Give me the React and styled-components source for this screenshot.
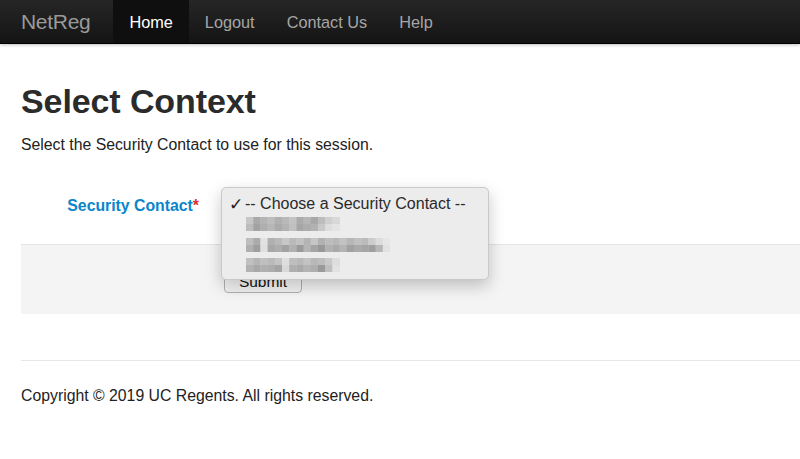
import React from "react";
import styled, { createGlobalStyle } from "styled-components";

const GlobalStyle = createGlobalStyle`
  html, body { margin: 0; padding: 0; background: #fff; }
  body {
    font-family: "Liberation Sans", Arial, Helvetica, sans-serif;
    color: #333;
    overflow: hidden;
  }
  * { box-sizing: border-box; }
`;

const Navbar = styled.nav`
  height: 44px;
  display: flex;
  align-items: stretch;
  background: linear-gradient(to bottom, #262626, #141414);
  border-bottom: 1px solid #000;
  box-shadow: 0 1px 3px rgba(0, 0, 0, 0.25);
`;

const Brand = styled.a`
  display: flex;
  align-items: center;
  padding: 0 23px 0 21px;
  font-size: 21px;
  font-weight: 300;
  color: #9a9a9a;
  letter-spacing: -0.3px;
  text-decoration: none;
`;

const NavItem = styled.a`
  display: flex;
  align-items: center;
  padding: 1px 16px 0;
  font-size: 16.3px;
  color: ${(p) => (p.$active ? "#fff" : "#a6a6a6")};
  background: ${(p) => (p.$active ? "#0f0f0f" : "transparent")};
  text-decoration: none;
`;

const Main = styled.main`
  padding-left: 21px;
`;

const Title = styled.h1`
  margin: 37px 0 0;
  font-size: 34px;
  line-height: 40px;
  font-weight: bold;
  color: #2b2b2b;
  letter-spacing: -0.1px;
`;

const Lead = styled.p`
  margin: 14px 0 0;
  font-size: 15.8px;
  line-height: 20px;
  color: #222;
`;

const Form = styled.form`
  margin-top: 30px;
`;

const ControlGroup = styled.div`
  display: flex;
  align-items: flex-start;
  height: 59px;
`;

const Label = styled.label`
  width: 178px;
  text-align: right;
  font-size: 15.8px;
  font-weight: bold;
  color: #0a85cc;
  line-height: 20px;
  padding-top: 11px;
`;

const Req = styled.span`
  color: #d9302c;
`;

const Controls = styled.div`
  position: relative;
  margin-left: 25px;
`;

const Popup = styled.div`
  position: absolute;
  left: -3px;
  top: 2px;
  z-index: 5;
  width: 268px;
  height: 93px;
  padding-top: 5px;
  background: #ececec;
  border: 1px solid #c9c9c9;
  border-radius: 5px;
  box-shadow: 0 6px 16px rgba(0, 0, 0, 0.22);
`;

const Option = styled.div`
  display: flex;
  align-items: center;
  height: 21px;
  padding: 1px 0 0 7px;
  font-size: 16px;
  color: #2a2a2a;
`;

const Check = styled.span`
  width: 16px;
  font-size: 17px;
  font-family: "DejaVu Sans", sans-serif;
  color: #222;
`;

const BlurRow = styled.div`
  height: 20.5px;
  padding-left: 24px;
  display: flex;
  align-items: center;
  filter: blur(0.4px);
`;

const FormActions = styled.div`
  height: 70px;
  background: #f4f4f4;
  border-top: 1px solid #e4e4e4;
  padding: 25px 0 0 203px;
`;

const SubmitButton = styled.button`
  width: 78px;
  height: 23px;
  font-family: "Liberation Sans", Arial, sans-serif;
  font-size: 15.5px;
  color: #111;
  background: linear-gradient(#fff, #f0f0f0);
  border: 1px solid #b0b0b0;
  border-radius: 4px;
  padding: 0;
`;

const Rule = styled.hr`
  margin: 46px 0 0;
  border: 0;
  border-top: 1px solid #e8e8e8;
`;

const Footer = styled.footer`
  margin-top: 25px;
  font-size: 15.8px;
  line-height: 20px;
  color: #222;
`;

const rows = [
  [
    ["#c6c6c6", "#a9a9a9", "#b4b4b4", "#bdbdbd", "#b0b0b0", "#b9b9b9", "#c3c3c3", "#ababab", "#b6b6b6", "#a8a8a8", "#bcbcbc", "#cfcfcf", "#d8d8d8"],
    ["#bcbcbc", "#a2a2a2", "#afafaf", "#b7b7b7", "#aaaaaa", "#b3b3b3", "#c0c0c0", "#a6a6a6", "#adadad", "#b2b2b2", "#c8c8c8", "#dddddd", "#e4e4e4"],
  ],
  [
    ["#bdbdbd", "#ababab", "#e2e2e2", "#b0b0b0", "#b9b9b9", "#c7c7c7", "#bababa", "#c2c2c2", "#b4b4b4", "#c6c6c6", "#b1b1b1", "#bcbcbc", "#b8b8b8", "#c2c2c2", "#b6b6b6", "#c0c0c0", "#bbbbbb", "#cccccc", "#dcdcdc", "#e6e6e6"],
    ["#b0b0b0", "#9e9e9e", "#e0e0e0", "#a7a7a7", "#adadad", "#a2a2a2", "#b1b1b1", "#9a9a9a", "#b5b5b5", "#a4a4a4", "#989898", "#b1b1b1", "#a9a9a9", "#b4b4b4", "#a1a1a1", "#aaaaaa", "#a5a5a5", "#9f9f9f", "#b7b7b7", "#e2e2e2"],
  ],
  [
    ["#c0c0c0", "#b5b5b5", "#bfbfbf", "#bababa", "#c4c4c4", "#dedede", "#bebebe", "#b9b9b9", "#c3c3c3", "#b8b8b8", "#bdbdbd", "#c9c9c9", "#dddddd"],
    ["#b2b2b2", "#a8a8a8", "#b0b0b0", "#adadad", "#a4a4a4", "#d9d9d9", "#afafaf", "#a9a9a9", "#b3b3b3", "#aeaeae", "#9a9a9a", "#bfbfbf", "#e2e2e2"],
  ],
];

function Pixelated({ data }) {
  const w = 7.2;
  const h = 7;
  const width = Math.ceil(Math.max(...data.map((r) => r.length)) * w);
  return (
    <svg width={width} height={h * 2} viewBox={`0 0 ${width} ${h * 2}`}>
      {data.map((row, ri) =>
        row.map((c, ci) => (
          <rect key={`${ri}-${ci}`} x={ci * w} y={ri * h} width={w + 0.3} height={h} fill={c} />
        ))
      )}
    </svg>
  );
}

export default function App() {
  return (
    <>
      <GlobalStyle />
      <Navbar>
        <Brand>NetReg</Brand>
        <NavItem $active>Home</NavItem>
        <NavItem>Logout</NavItem>
        <NavItem>Contact Us</NavItem>
        <NavItem>Help</NavItem>
      </Navbar>
      <Main>
        <Title>Select Context</Title>
        <Lead>Select the Security Contact to use for this session.</Lead>
        <Form>
          <ControlGroup>
            <Label>
              Security Contact<Req>*</Req>
            </Label>
            <Controls>
              <Popup>
                <Option>
                  <Check>✓</Check>-- Choose a Security Contact --
                </Option>
                {rows.map((r, i) => (
                  <BlurRow key={i}>
                    <Pixelated data={r} />
                  </BlurRow>
                ))}
              </Popup>
            </Controls>
          </ControlGroup>
          <FormActions>
            <SubmitButton type="button">Submit</SubmitButton>
          </FormActions>
        </Form>
        <Rule />
        <Footer>Copyright © 2019 UC Regents. All rights reserved.</Footer>
      </Main>
    </>
  );
}
